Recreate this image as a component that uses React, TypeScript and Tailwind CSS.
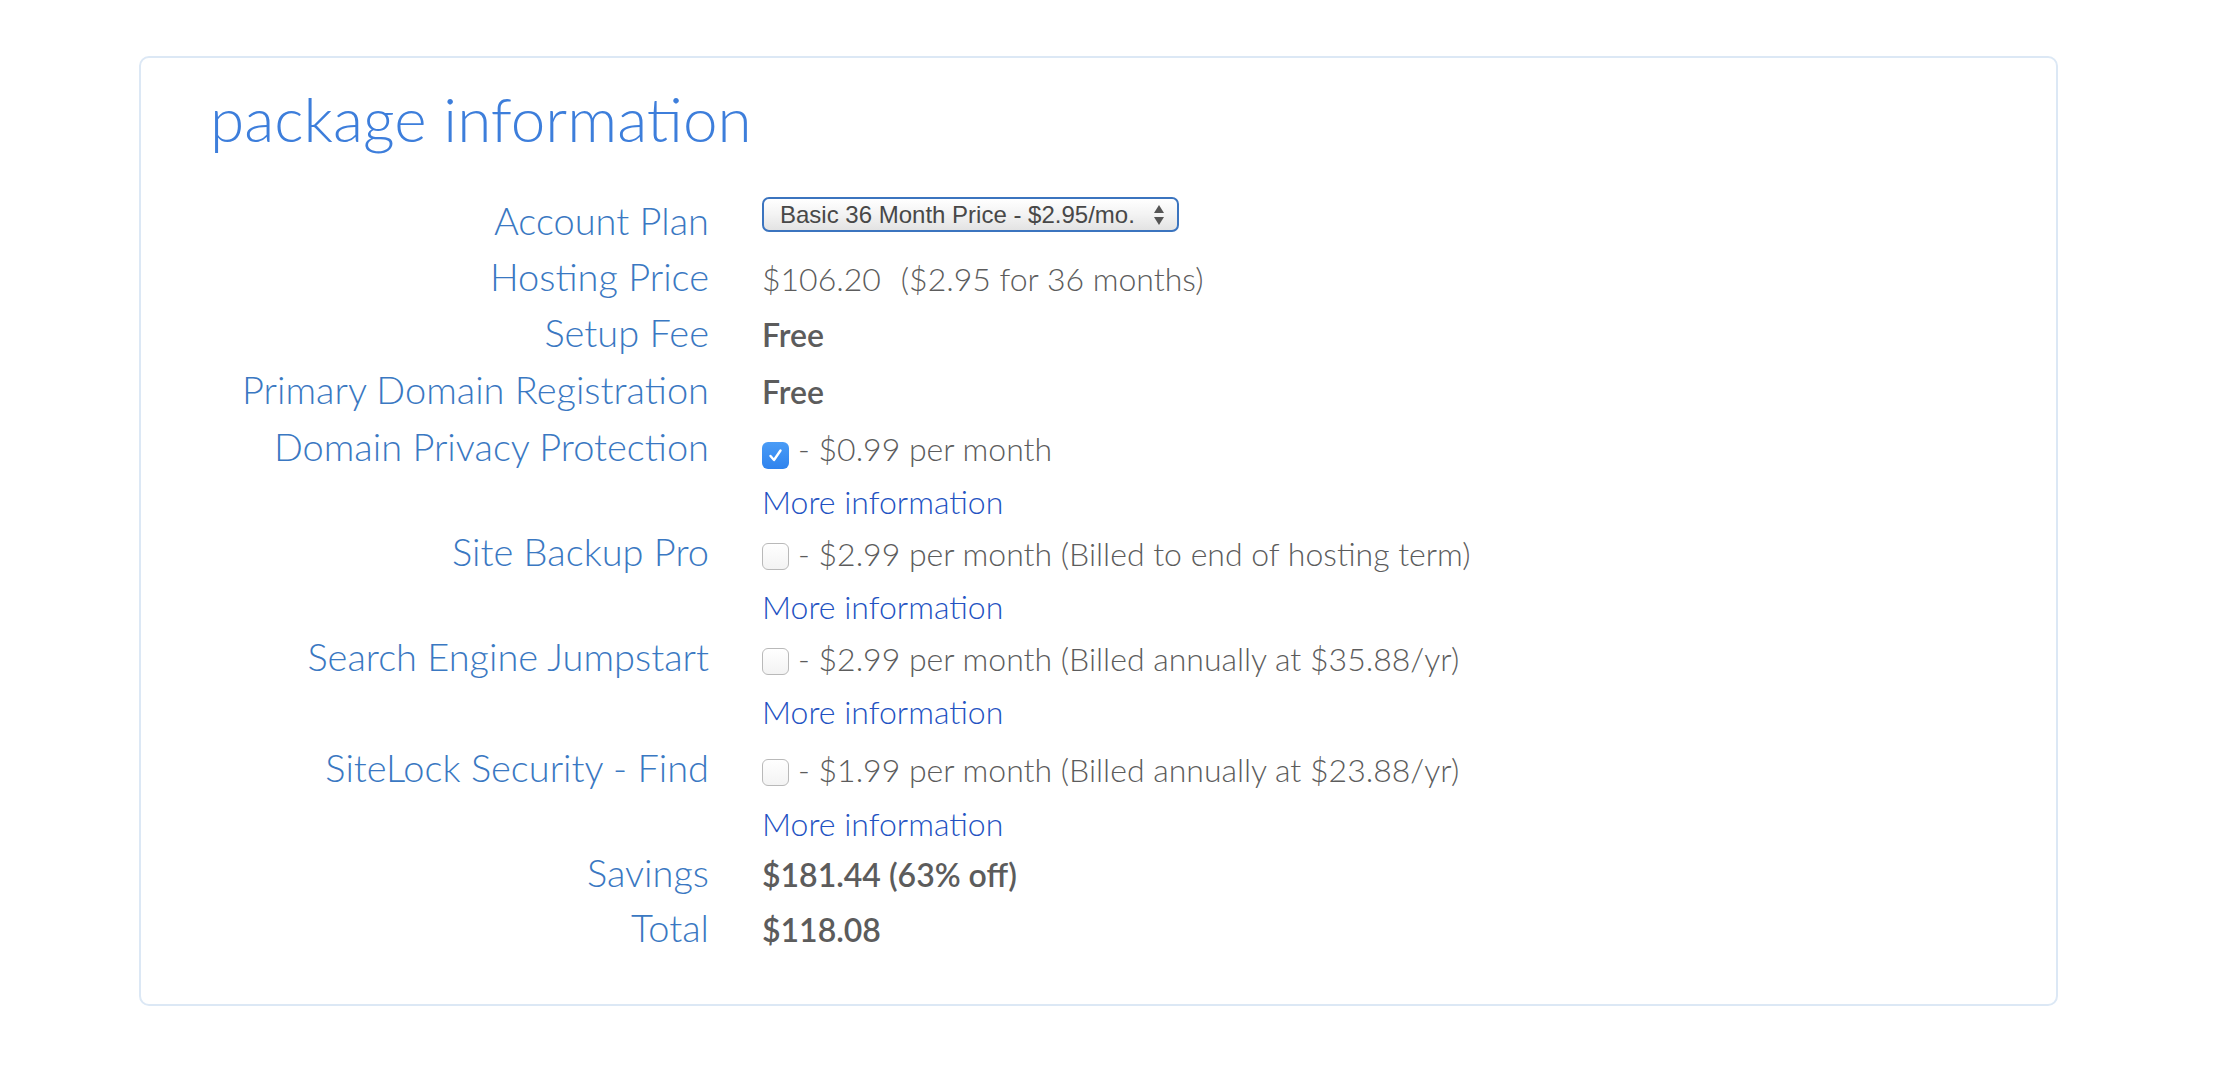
import React from "react";

function Checkbox({ checked }: { checked?: boolean }) {
  if (checked) {
    return (
      <span className="mr-[9px] inline-flex h-[27px] w-[27px] items-center justify-center rounded-[6px] bg-linear-to-b from-[#4a9cf6] to-[#2f83ee] align-[-3px]">
        <svg width="17" height="17" viewBox="0 0 17 17">
          <path d="M3.5 9 L7 13 L13.5 3.5" fill="none" stroke="#fff" strokeWidth="2.4" strokeLinecap="round" strokeLinejoin="round" />
        </svg>
      </span>
    );
  }
  return (
    <span className="mr-[9px] inline-block h-[27px] w-[27px] rounded-[6px] border border-[#b9b9b9] bg-linear-to-b from-white to-[#f3f3f3] align-[-4px]" />
  );
}

function Row({
  hc,
  label,
  children,
  start,
}: {
  hc: string;
  label?: string;
  children: React.ReactNode;
  start?: boolean;
}) {
  return (
    <div className={`flex ${start ? "items-start" : "items-baseline"} ${hc}`}>
      <div className="w-[568px] shrink-0 text-right text-[38px] font-light text-[#3a78c2]">
        {label ?? "\u00a0"}
      </div>
      <div className="ml-[53px] whitespace-nowrap text-[32px] leading-[40px] font-light text-[#5c5c5c]">
        {children}
      </div>
    </div>
  );
}

function MoreInfo() {
  return <a className="text-[#2352c2] font-light cursor-pointer">More information</a>;
}

export default function App() {
  return (
    <div className="min-h-[1078px] w-full bg-white font-['Lato',sans-serif] pt-[56px]">
      <div className="ml-[139px] h-[950px] w-[1919px] rounded-[10px] border-2 border-[#dce8f5] pt-[29px]">
        <h1 className="pl-[69px] text-[62px] leading-[62px] font-light text-[#3d7edb]">
          package information
        </h1>
        <div className="mt-[44px] flex flex-col">
          <Row hc="h-[55px] leading-[55px]" label="Account Plan" start>
            <div className="mt-[4px] flex h-[35px] w-[417px] items-center justify-between rounded-[7px] border-2 border-[#3b74bf] bg-linear-to-b from-white via-[#f3f3f3] to-[#e3e3e3] pl-[16px] pr-[12px] font-['Liberation_Sans',Arial,sans-serif] text-[24px] leading-[30px] font-normal text-[#484848]">
              <span>Basic 36 Month Price - $2.95/mo.</span>
              <svg width="12" height="24" viewBox="0 0 12 24">
                <path d="M6 2 L11 10 H1 Z" fill="#555" />
                <path d="M6 22 L11 14 H1 Z" fill="#555" />
              </svg>
            </div>
          </Row>
          <Row hc="h-[56px] leading-[56px]" label="Hosting Price">
            <span>$106.20</span>
            <span className="ml-[20px]">($2.95 for 36 months)</span>
          </Row>
          <Row hc="h-[56px] leading-[56px]" label="Setup Fee">
            <span className="font-semibold">Free</span>
          </Row>
          <Row hc="h-[58px] leading-[58px]" label="Primary Domain Registration">
            <span className="font-semibold">Free</span>
          </Row>
          <Row hc="h-[56px] leading-[56px]" label="Domain Privacy Protection">
            <Checkbox checked />
            <span>- $0.99 per month</span>
          </Row>
          <Row hc="h-[50px] leading-[50px]">
            <MoreInfo />
          </Row>
          <Row hc="h-[55px] leading-[55px]" label="Site Backup Pro">
            <Checkbox />
            <span>- $2.99 per month (Billed to end of hosting term)</span>
          </Row>
          <Row hc="h-[50px] leading-[50px]">
            <MoreInfo />
          </Row>
          <Row hc="h-[54px] leading-[54px]" label="Search Engine Jumpstart">
            <Checkbox />
            <span>- $2.99 per month (Billed annually at $35.88/yr)</span>
          </Row>
          <Row hc="h-[53px] leading-[53px]">
            <MoreInfo />
          </Row>
          <Row hc="h-[62px] leading-[62px]" label="SiteLock Security - Find">
            <Checkbox />
            <span>- $1.99 per month (Billed annually at $23.88/yr)</span>
          </Row>
          <Row hc="h-[46px] leading-[46px]">
            <MoreInfo />
          </Row>
          <Row hc="h-[56px] leading-[56px]" label="Savings">
            <span className="font-semibold">$181.44 (63% off)</span>
          </Row>
          <Row hc="h-[55px] leading-[55px]" label="Total">
            <span className="font-semibold">$118.08</span>
          </Row>
        </div>
      </div>
    </div>
  );
}
